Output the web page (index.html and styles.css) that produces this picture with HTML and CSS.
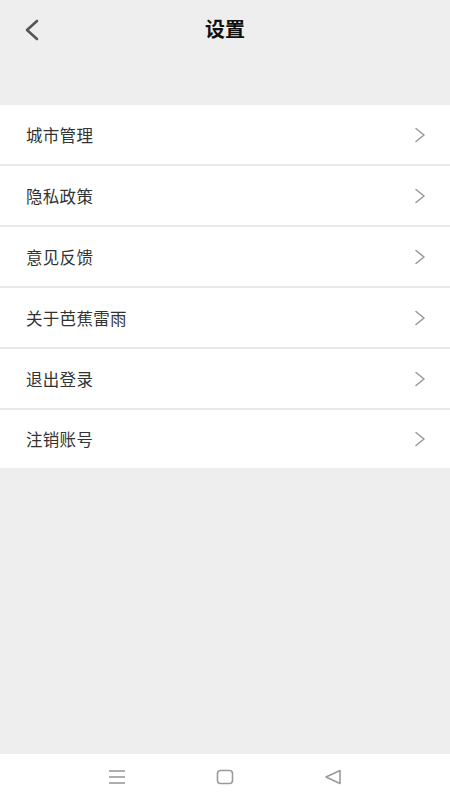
FILE: index.html
```html
<!DOCTYPE html>
<html lang="zh">
<head>
<meta charset="utf-8">
<title>设置</title>
<link rel="stylesheet" href="styles.css">
</head>
<body>
<div class="screen">
  <header class="topbar">
    <span class="back">
      <svg width="16" height="22" viewBox="0 0 16 22"><polyline points="13,2 3,11 13,20" fill="none" stroke="#555" stroke-width="2.6" stroke-linecap="round" stroke-linejoin="round"/></svg>
    </span>
    <h1 class="title">设置</h1>
  </header>
  <div class="spacer"></div>
  <ul class="list">
    <li class="row"><span class="label">城市管理</span><svg class="arrow" width="12" height="16" viewBox="0 0 12 16"><polyline points="2,1.5 10,8 2,14.5" fill="none" stroke="#999" stroke-width="1.6" stroke-linejoin="round" stroke-linecap="round"/></svg></li>
    <li class="row"><span class="label">隐私政策</span><svg class="arrow" width="12" height="16" viewBox="0 0 12 16"><polyline points="2,1.5 10,8 2,14.5" fill="none" stroke="#999" stroke-width="1.6" stroke-linejoin="round" stroke-linecap="round"/></svg></li>
    <li class="row"><span class="label">意见反馈</span><svg class="arrow" width="12" height="16" viewBox="0 0 12 16"><polyline points="2,1.5 10,8 2,14.5" fill="none" stroke="#999" stroke-width="1.6" stroke-linejoin="round" stroke-linecap="round"/></svg></li>
    <li class="row"><span class="label">关于芭蕉雷雨</span><svg class="arrow" width="12" height="16" viewBox="0 0 12 16"><polyline points="2,1.5 10,8 2,14.5" fill="none" stroke="#999" stroke-width="1.6" stroke-linejoin="round" stroke-linecap="round"/></svg></li>
    <li class="row"><span class="label">退出登录</span><svg class="arrow" width="12" height="16" viewBox="0 0 12 16"><polyline points="2,1.5 10,8 2,14.5" fill="none" stroke="#999" stroke-width="1.6" stroke-linejoin="round" stroke-linecap="round"/></svg></li>
    <li class="row"><span class="label">注销账号</span><svg class="arrow" width="12" height="16" viewBox="0 0 12 16"><polyline points="2,1.5 10,8 2,14.5" fill="none" stroke="#999" stroke-width="1.6" stroke-linejoin="round" stroke-linecap="round"/></svg></li>
  </ul>
  <div class="fill"></div>
  <nav class="sysnav">
    <svg width="18" height="16" viewBox="0 0 18 16"><g stroke="#9a9a9a" stroke-width="1.6"><line x1="1" y1="2" x2="17" y2="2"/><line x1="1" y1="8" x2="17" y2="8"/><line x1="1" y1="14" x2="17" y2="14"/></g></svg>
    <svg width="18" height="16" viewBox="0 0 18 16"><rect x="1.5" y="1.5" width="15" height="13" rx="3" fill="none" stroke="#9a9a9a" stroke-width="1.6"/></svg>
    <svg width="18" height="16" viewBox="0 0 18 16"><polygon points="16,1.5 16,14.5 2,8" fill="none" stroke="#9a9a9a" stroke-width="1.6" stroke-linejoin="round"/></svg>
  </nav>
</div>
</body>
</html>
```
FILE: styles.css
```css
* { box-sizing: border-box; }
html, body { margin: 0; padding: 0; }
body {
  font-family: "Noto Sans CJK SC", "Noto Sans", sans-serif;
  background: #eeeeee;
}
.screen {
  width: 450px;
  height: 800px;
  display: flex;
  flex-direction: column;
  background: #eeeeee;
}
.topbar {
  height: 60px;
  display: flex;
  align-items: center;
  justify-content: center;
  position: relative;
}
.back {
  position: absolute;
  left: 24px;
  top: 19px;
  display: flex;
}
.title {
  margin: 0 0 2px 0;
  font-size: 20px;
  font-weight: 700;
  color: #111;
  line-height: 1;
}
.spacer { height: 45px; }
.list {
  list-style: none;
  margin: 0;
  padding: 0;
  background: #fff;
}
.row {
  height: 61px;
  display: flex;
  align-items: center;
  justify-content: space-between;
  padding: 0 24px 0 26px;
  border-bottom: 2px solid #e8e8e8;
}
.row:last-child {
  height: 58px;
  border-bottom: none;
}
.label {
  font-size: 16.5px;
  color: #333;
  letter-spacing: 0.3px;
}
.arrow { display: block; }
.fill { flex: 1; }
.sysnav {
  height: 46px;
  background: #fff;
  display: flex;
  justify-content: center;
  align-items: center;
  gap: 90px;
}
.sysnav svg { display: block; }
```
